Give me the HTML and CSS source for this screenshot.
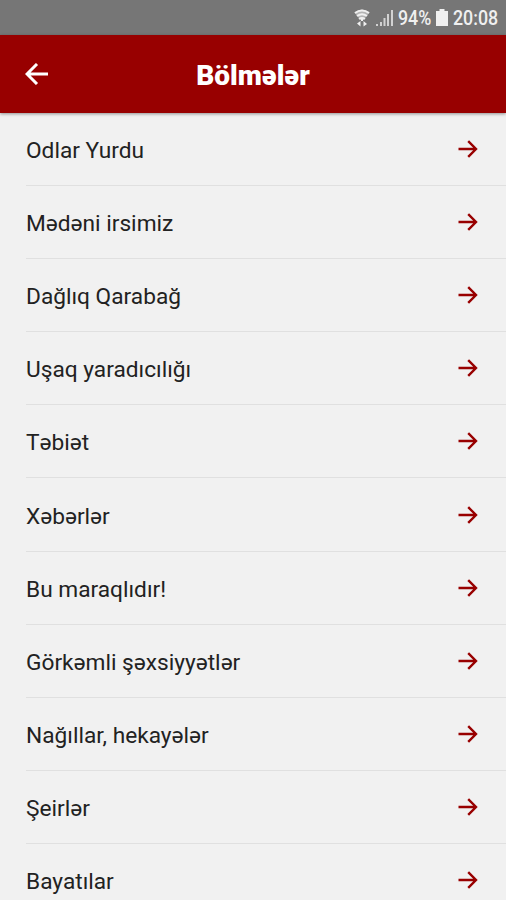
FILE: index.html
```html
<!DOCTYPE html>
<html lang="az">
  <head>
    <meta charset="UTF-8" />
    <meta name="viewport" content="width=device-width, initial-scale=1.0" />
    <title>Bölmələr</title>
    <link rel="stylesheet" href="styles.css">
  </head>
  <body>
    <svg class="symbols" width="0" height="0">
      <symbol id="arrow" viewBox="0 0 20 18">
        <path d="M0.5 9H18M10.2 1.2L18 9L10.2 16.8" />
      </symbol>
    </svg>
    <div class="status-bar">
      <svg class="wifi" width="16" height="18" viewBox="0 0 16 18">
        <path class="fan" d="M0.5 3.5Q8 -2.5 15.5 3.5L9.5 11h-3z" />
        <path d="M1 4Q8 -1.2 15 4M3 7Q8 3.4 13 7M5 10Q8 8 11 10" />
        <path class="fill" d="M7 10h2v2H7zM6.5 12v5.5L3 14.5zM9.5 17.5v-5.5l3.5 3z" />
      </svg>
      <svg class="signal" width="18" height="17" viewBox="0 0 18 17">
        <path d="M0 17v-2h2v2zM4 17v-4h2v4zM7.5 17v-8h2v8zM11 17v-12h2v12zM15 17v-16h2v16z" />
      </svg>
      <span class="battery-text">94%</span>
      <svg class="battery" width="12" height="17" viewBox="0 0 12 17">
        <path d="M3.5 0h5v2H12v15H0V2h3.5z" />
      </svg>
      <span class="clock">20:08</span>
    </div>
    <header class="header">
      <svg class="back" width="24" height="22" viewBox="0 0 24 22">
        <path d="M23 11H2M12 1L2 11L12 21" />
      </svg>
      <h1>Bölmələr</h1>
    </header>
    <ul class="list">
      <li><span>Odlar Yurdu</span><svg class="arrow"><use href="#arrow" /></svg></li>
      <li><span>Mədəni irsimiz</span><svg class="arrow"><use href="#arrow" /></svg></li>
      <li><span>Dağlıq Qarabağ</span><svg class="arrow"><use href="#arrow" /></svg></li>
      <li><span>Uşaq yaradıcılığı</span><svg class="arrow"><use href="#arrow" /></svg></li>
      <li><span>Təbiət</span><svg class="arrow"><use href="#arrow" /></svg></li>
      <li><span>Xəbərlər</span><svg class="arrow"><use href="#arrow" /></svg></li>
      <li><span>Bu maraqlıdır!</span><svg class="arrow"><use href="#arrow" /></svg></li>
      <li><span>Görkəmli şəxsiyyətlər</span><svg class="arrow"><use href="#arrow" /></svg></li>
      <li><span>Nağıllar, hekayələr</span><svg class="arrow"><use href="#arrow" /></svg></li>
      <li><span>Şeirlər</span><svg class="arrow"><use href="#arrow" /></svg></li>
      <li><span>Bayatılar</span><svg class="arrow"><use href="#arrow" /></svg></li>
    </ul>
  </body>
</html>
```

FILE: styles.css
```css
* {
  margin: 0;
  padding: 0;
  box-sizing: border-box;
}
body {
  height: 100vh;
  display: flex;
  flex-direction: column;
  overflow: hidden;
  font-family: Roboto, "Noto Sans", sans-serif;
  background: #f1f1f1;
}
.symbols {
  display: none;
}
svg {
  flex-shrink: 0;
}
.status-bar {
  flex-shrink: 0;
  height: 35px;
  display: flex;
  align-items: center;
  justify-content: flex-end;
  padding-right: 7px;
  font-size: 20px;
  font-weight: 500;
  color: #f0f0f0;
  background: #767676;
}
.status-bar svg {
  fill: #f0f0f0;
}
.status-bar .wifi {
  margin-right: 6px;
  fill: none;
  stroke: #f0f0f0;
  stroke-width: 2;
}
.wifi .fan {
  fill: #b4b4b4;
  stroke: none;
}
.wifi .fill {
  fill: #f0f0f0;
  stroke: none;
}
.status-bar .signal {
  margin-right: 4px;
  fill: #d2d2d2;
}
.battery-text,
.clock {
  transform: scaleX(0.89);
  transform-origin: left;
  white-space: nowrap;
}
.battery-text {
  width: 34px;
  margin-right: 4px;
}
.battery {
  margin-right: 5px;
}
.clock {
  width: 46px;
}
.header {
  flex-shrink: 0;
  height: 78px;
  display: grid;
  grid-template-columns: 1fr auto 1fr;
  align-items: center;
  padding: 0 25px;
  color: #fff;
  background: #980000;
  box-shadow: 0 1px 3px rgba(0, 0, 0, 0.4);
}
.header h1 {
  padding-top: 3px;
  font-size: 28px;
  font-weight: 900;
  line-height: 32px;
}
.back {
  fill: none;
  stroke: #fff;
  stroke-width: 3;
}
.list {
  list-style: none;
  padding-left: 26px;
}
.list li {
  height: 73.1px;
  display: flex;
  align-items: center;
  justify-content: space-between;
  padding-right: 28px;
  font-size: 22.7px;
  color: #222;
  border-bottom: 1px solid #e0e0e0;
}
.list span {
  padding-top: 3px;
}
.arrow {
  width: 20px;
  height: 18px;
  fill: none;
  stroke: #980000;
  stroke-width: 2.4;
}
```
